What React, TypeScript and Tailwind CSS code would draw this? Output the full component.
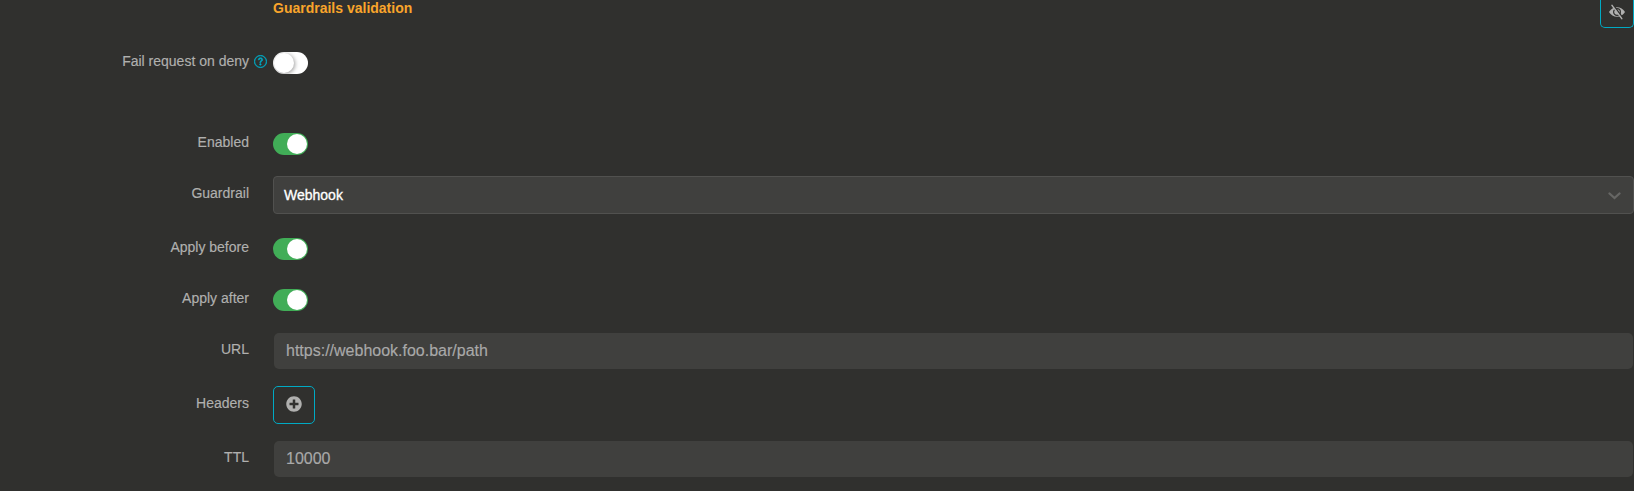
import type { ReactNode } from "react";
import { FaPlusCircle } from "react-icons/fa";

function Row({ label, className, labelClass = "", help, children }: { label: string; className: string; labelClass?: string; help?: boolean; children: ReactNode }) {
  return (
    <div className={`flex items-start ${className}`}>
      <div className={`flex w-[273px] shrink-0 justify-end text-sm leading-[18px] ${help ? "pr-[6px]" : "pr-[24px]"} ${labelClass}`}>
        <span className="whitespace-nowrap [-webkit-text-stroke:0.15px_#b0b0af]">{label}</span>
        {help && (
          <svg viewBox="0 0 16 16" className="mt-[3px] ml-[5px] size-[13px]" fill="#00aac4" stroke="#00aac4" strokeWidth=".8">
            <path d="M8 15A7 7 0 1 1 8 1a7 7 0 0 1 0 14m0 .6A7.6 7.6 0 1 0 8 .4a7.6 7.6 0 0 0 0 15.2" />
            <path d="M5.255 5.786a.237.237 0 0 0 .241.247h.825c.138 0 .248-.113.266-.25.09-.656.54-1.134 1.342-1.134.686 0 1.314.343 1.314 1.168 0 .635-.374.927-.965 1.371-.673.489-1.206 1.06-1.168 1.987l.003.217a.25.25 0 0 0 .25.246h.811a.25.25 0 0 0 .25-.25v-.105c0-.718.273-.927 1.01-1.486.609-.463 1.244-.977 1.244-2.056 0-1.511-1.276-2.241-2.673-2.241-1.267 0-2.655.59-2.75 2.286m1.557 5.763c0 .533.425.927 1.01.927.609 0 1.028-.394 1.028-.927 0-.552-.42-.94-1.029-.94-.584 0-1.009.388-1.009.94" />
          </svg>
        )}
      </div>
      {children}
    </div>
  );
}

function Toggle({ on = false }: { on?: boolean }) {
  return (
    <button
      type="button"
      role="switch"
      aria-checked={on}
      className={`flex h-[22px] w-[35px] shrink-0 items-center overflow-hidden rounded-full p-px ${on ? "justify-end bg-[#41ad57]" : "bg-white"}`}
    >
      <span className={`size-5 rounded-full bg-white ${on ? "" : "shadow-[1px_1px_4px_rgba(0,0,0,0.4)]"}`} />
    </button>
  );
}

function Field({ value }: { value: string }) {
  return (
    <input
      readOnly
      value={value}
      className="mt-px mr-px ml-px h-9 min-w-0 flex-1 rounded-[5px] bg-[#40403e] px-3 text-base text-[#a9a9a9] outline-none [-webkit-text-stroke:0.15px_#a9a9a9]"
    />
  );
}

function EyeSlash() {
  return (
    <svg viewBox="0 0 16 16" className="size-4" fill="none">
      <path d="M0 8C1.8 4.8 4.7 3.2 8 3.2s6.2 1.6 8 4.8c-1.8 3.2-4.700 4.800-8 4.800S1.800 11.200 0 8Z" fill="#b0b0af" />
      <circle cx="8" cy="8" r="3.4" stroke="#30302e" strokeWidth="1.2" />
      <path d="M4.300 1 13.800 14" stroke="#30302e" strokeWidth="1.500" />
      <path d="M3 1.400 12.800 14.600" stroke="#b0b0af" strokeWidth="1.500" strokeLinecap="round" />
    </svg>
  );
}

export default function App() {
  return (
    <div className="flex h-[491px] w-full flex-col overflow-hidden bg-[#30302e] font-['Liberation_Sans',Arial,sans-serif] text-[#b0b0af]">
      <div className="flex h-[52px] shrink-0 items-start justify-between pl-[273px]">
        <h2 className="text-sm leading-4 font-bold text-[#f9a52b]">Guardrails validation</h2>
        <button type="button" aria-label="Hide" className="flex h-7 w-[34px] items-center justify-center rounded-b-[5px] border border-t-0 border-[#00aac4] pb-[3px]">
          <EyeSlash />
        </button>
      </div>
      <Row label="Fail request on deny" className="h-[81px]" help><Toggle /></Row>
      <Row label="Enabled" className="h-[43px]"><Toggle on /></Row>
      <Row label="Guardrail" className="h-[62px]" labelClass="pt-2">
        <div className="flex h-[38px] flex-1 items-center justify-between rounded border border-[#51514f] bg-[#40403e] pr-[12px] pl-[10px] text-sm text-white">
          <span className="[-webkit-text-stroke:0.3px_white]">Webhook</span>
          <svg viewBox="0 0 13 8" className="mt-px h-2 w-[13px]" fill="none" stroke="#666664" strokeWidth="2.300" strokeLinecap="round">
            <path d="M1.500 1.500 6.500 6l5-4.500" />
          </svg>
        </div>
      </Row>
      <Row label="Apply before" className="h-[51px]"><Toggle on /></Row>
      <Row label="Apply after" className="h-[43px]"><Toggle on /></Row>
      <Row label="URL" className="h-[54px]" labelClass="pt-2"><Field value="https://webhook.foo.bar/path" /></Row>
      <Row label="Headers" className="h-[54px]" labelClass="pt-2">
        <button type="button" aria-label="Add header" className="flex h-[38px] w-[42px] items-center justify-center rounded-[5px] border border-[#00aac4] pb-[2px]">
          <FaPlusCircle className="size-4" />
        </button>
      </Row>
      <Row label="TTL" className="h-[51px]" labelClass="pt-2"><Field value="10000" /></Row>
    </div>
  );
}
